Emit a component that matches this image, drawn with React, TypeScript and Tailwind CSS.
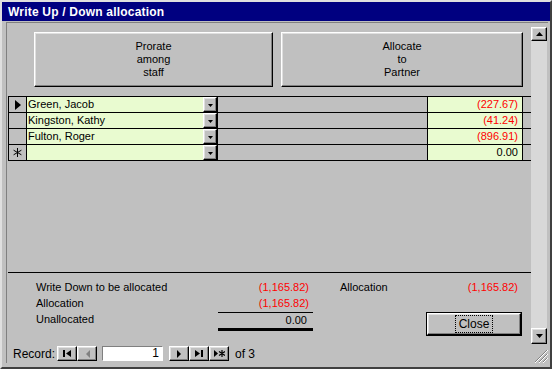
import React from 'react';

type Row = { name: string; amount: string; neg: boolean; marker?: 'current' | 'new' };

const ROWS: Row[] = [
  { name: 'Green, Jacob', amount: '(227.67)', neg: true, marker: 'current' },
  { name: 'Kingston, Kathy', amount: '(41.24)', neg: true },
  { name: 'Fulton, Roger', amount: '(896.91)', neg: true },
  { name: '', amount: '0.00', neg: false, marker: 'new' },
];

const raised =
  'bg-[#c0c0c0] border border-t-white border-l-white border-r-black border-b-black shadow-[inset_-1px_-1px_0_#808080,inset_1px_1px_0_#dfdfdf]';

function BigButton({ lines, width }: { lines: string[]; width: string }) {
  return (
    <div className={`${raised} ${width} h-[55px] flex flex-col items-center justify-center leading-[13px]`}>
      {lines.map((l) => (
        <span key={l}>{l}</span>
      ))}
    </div>
  );
}

function DropArrow() {
  return (
    <svg width="5" height="3" viewBox="0 0 5 3">
      <path d="M0 0h5L2.5 3z" fill="black" />
    </svg>
  );
}

function GridRow({ row }: { row: Row }) {
  return (
    <div className="flex h-[16px] border-t border-black">
      {/* record selector */}
      <div className="w-[18px] border-l border-black flex items-center justify-center">
        {row.marker === 'current' && (
          <svg width="6" height="10" viewBox="0 0 6 10">
            <path d="M0 0l6 5-6 5z" fill="black" />
          </svg>
        )}
        {row.marker === 'new' && (
          <svg width="9" height="9" viewBox="0 0 9 9">
            <path d="M4.5 0v9M0.6 2.2l7.8 4.6M0.6 6.8l7.8-4.6" stroke="black" strokeWidth="1" />
          </svg>
        )}
      </div>
      {/* name combo */}
      <div className="w-[177px] border-l border-black bg-[#e9fbd0] pl-[1px] flex items-center">{row.name}</div>
      <div className={`w-[14px] ${raised} flex items-end justify-center pb-[4px]`}>
        <DropArrow />
      </div>
      <div className="w-[210px] border-l border-black" />
      <div
        className={`w-[96px] border-l border-r border-black bg-[#e9fbd0] flex items-center justify-end pr-[4px] ${
          row.neg ? 'text-[#ff0000]' : 'text-black'
        }`}
      >
        {row.amount}
      </div>
      <div className="flex-1" />
    </div>
  );
}

function NavButton({ children }: { children: React.ReactNode }) {
  return <div className={`${raised} w-[20px] h-[15px] flex items-center justify-center`}>{children}</div>;
}

export default function App() {
  return (
    <div className="w-[552px] h-[369px] bg-[#c0c0c0] border-2 border-t-[#dfdfdf] border-l-[#dfdfdf] border-r-[#404040] border-b-[#404040] flex flex-col font-['Liberation_Sans',Arial,sans-serif] text-[11px] text-black leading-none overflow-hidden">
      {/* Title bar */}
      <div className="h-[19px] bg-[#000080] text-white font-bold text-[12px] tracking-[0.2px] pl-[6px] flex items-center">
        Write Up / Down allocation
      </div>

      {/* Body */}
      <div className="mt-[1px] ml-[4px] mr-[2px] h-[341px] flex border-t border-l border-t-[#808080] border-l-[#808080]">
        {/* Form column */}
        <div className="w-[524px] flex flex-col">
          <div className="flex-1 flex flex-col">
            <div className="flex gap-[8px] pt-[9px] pl-[27px]">
              <BigButton lines={['Prorate', 'among', 'staff']} width="w-[239px]" />
              <BigButton lines={['Allocate', 'to', 'Partner']} width="w-[242px]" />
            </div>

            {/* Continuous subform rows */}
            <div className="mt-[9px] ml-[1px] border-b border-black">
              {ROWS.map((r, i) => (
                <GridRow key={i} row={r} />
              ))}
            </div>

            <div className="flex-1" />

            {/* Footer */}
            <div className="h-[72px] ml-[1px] border-t border-black flex pt-[6px] pl-[28px]">
              <div className="flex flex-col">
                <div className="flex h-[16px] items-center">
                  <span className="w-[182px]">Write Down to be allocated</span>
                  <span className="w-[95px] text-right pr-[4px] text-[#ff0000]">(1,165.82)</span>
                </div>
                <div className="flex h-[16px] items-center">
                  <span className="w-[182px]">Allocation</span>
                  <span className="w-[95px] text-right pr-[4px] text-[#ff0000]">(1,165.82)</span>
                </div>
                <div className="flex h-[19px] items-start">
                  <span className="w-[182px] leading-[16px]">Unallocated</span>
                  <span className="mt-[1px] w-[95px] h-[19px] border-t border-b-[3px] border-black text-right pr-[6px] leading-[14px]">
                    0.00
                  </span>
                </div>
              </div>
              <div className="ml-[27px] w-[182px] flex flex-col">
                <div className="flex h-[16px] items-center">
                  <span>Allocation</span>
                  <span className="flex-1 text-right pr-[4px] text-[#ff0000]">(1,165.82)</span>
                </div>
                <div className="mt-[17px] ml-auto w-[96px] h-[24px] border border-black">
                  <div className={`${raised} w-full h-full flex items-center justify-center`}>
                    <span className="px-[3px] py-[2px] outline-1 outline-dotted outline-black text-[12px]">Close</span>
                  </div>
                </div>
              </div>
            </div>
          </div>

          {/* Record navigation */}
          <div className="h-[19px] flex items-center pl-[6px]">
            <span className="w-[44px] text-[12px]">Record:</span>
            <NavButton>
              <svg width="8" height="7" viewBox="0 0 8 7">
                <path d="M0 0h2v7H0zM8 0v7L3 3.5z" fill="black" />
              </svg>
            </NavButton>
            <NavButton>
              <svg width="5" height="8" viewBox="0 0 5 8">
                <path d="M5 0v8L1 4z" fill="#808080" />
              </svg>
            </NavButton>
            <div className="ml-[5px] w-[61px] h-[15px] bg-white border border-t-[#808080] border-l-[#808080] border-r-white border-b-white text-right pr-[3px] leading-[13px] text-[12px]">
              1
            </div>
            <div className="ml-[6px] flex">
              <NavButton>
                <svg width="5" height="8" viewBox="0 0 5 8">
                  <path d="M0 0v8l4-4z" fill="black" />
                </svg>
              </NavButton>
              <NavButton>
                <svg width="8" height="7" viewBox="0 0 8 7">
                  <path d="M0 0v7l5-3.5zM6 0h2v7H6z" fill="black" />
                </svg>
              </NavButton>
              <NavButton>
                <svg width="11" height="7" viewBox="0 0 11 7">
                  <path d="M0 0v7l4-3.5z" fill="black" />
                  <path d="M8 0v7M5 1.5l6 4M5 5.5l6-4" stroke="black" strokeWidth="1.2" />
                </svg>
              </NavButton>
            </div>
            <span className="ml-[6px] text-[12px]">of 3</span>
          </div>
        </div>

        {/* Scrollbar column */}
        <div className="w-[17px] flex flex-col pt-[4px]">
          <div className="w-[16px] h-[317px] flex flex-col">
            <div className={`${raised} h-[14px] flex items-center justify-center`}>
              <svg width="7" height="4" viewBox="0 0 7 4">
                <path d="M0 4h7L3.5 0z" fill="black" />
              </svg>
            </div>
            <div className="flex-1 bg-[#d8d8d8]" />
            <div className={`${raised} h-[16px] flex items-center justify-center`}>
              <svg width="7" height="4" viewBox="0 0 7 4">
                <path d="M0 0h7L3.5 4z" fill="black" />
              </svg>
            </div>
          </div>
          <div className="flex-1 flex items-end justify-end">
            <svg width="14" height="14" viewBox="0 0 14 14">
              <path d="M13 1L1 13M13 5L5 13M13 9L9 13" stroke="#808080" strokeWidth="1" />
              <path d="M14 1L1 14M14 5L5 14M14 9L9 14" stroke="white" strokeWidth="1" />
            </svg>
          </div>
        </div>
      </div>
    </div>
  );
}
